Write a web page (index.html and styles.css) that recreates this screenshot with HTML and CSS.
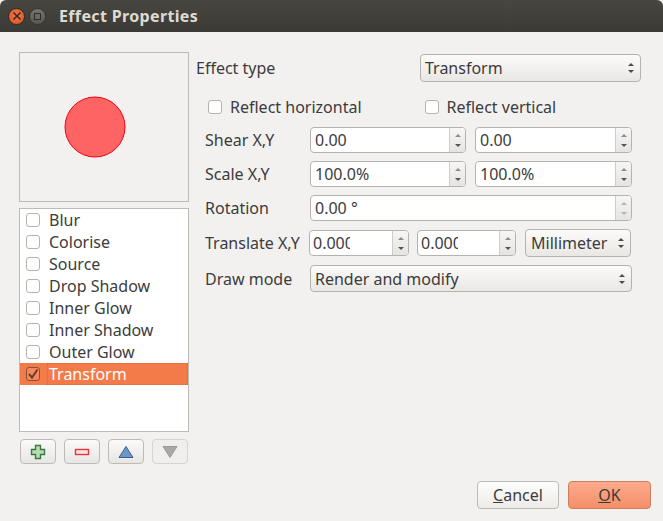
FILE: index.html
```html
<!DOCTYPE html>
<html lang="en">
<head>
    <meta charset="UTF-8">
    <meta name="viewport" content="width=device-width, initial-scale=1.0">
    <title>Effect Properties</title>
    <link rel="stylesheet" href="styles.css">
</head>
<body>
    <div class="titlebar">
        <span class="win-btn win-close">
            <svg width="10" height="10" viewBox="0 0 10 10"><path d="M1.5 1.5l7 7M8.5 1.5l-7 7" stroke="#3a2a20" stroke-width="1.6" fill="none"/></svg>
        </span>
        <span class="win-btn win-max"><span class="win-max-box"></span></span>
        <span class="win-title">Effect Properties</span>
    </div>

    <div class="content">
        <div class="left">
            <div class="preview">
                <svg width="62" height="62" viewBox="0 0 62 62"><circle cx="31" cy="31" r="30" fill="#ff6464" stroke="#f5000f" stroke-width="1"/></svg>
            </div>
            <div class="effect-list">
                <div class="effect-row"><span class="check"></span>Blur</div>
                <div class="effect-row"><span class="check"></span>Colorise</div>
                <div class="effect-row"><span class="check"></span>Source</div>
                <div class="effect-row"><span class="check"></span>Drop Shadow</div>
                <div class="effect-row"><span class="check"></span>Inner Glow</div>
                <div class="effect-row"><span class="check"></span>Inner Shadow</div>
                <div class="effect-row"><span class="check"></span>Outer Glow</div>
                <div class="effect-row selected">
                    <span class="check check-on">
                        <svg width="14" height="14" viewBox="0 0 14 14"><path d="M3 7l3 3.5L11.5 2.5" stroke="#6a3b2b" stroke-width="2" fill="none"/></svg>
                    </span>
                    <span class="focus-text">Transform</span>
                </div>
            </div>
            <div class="tool-row">
                <button class="tool-btn">
                    <svg width="16" height="16" viewBox="0 0 16 16"><path d="M5.5 1.5h5v4h4v5h-4v4h-5v-4h-4v-5h4z" fill="#b9dcb4" stroke="#3a7a40" stroke-width="1.4"/></svg>
                </button>
                <button class="tool-btn">
                    <svg width="16" height="16" viewBox="0 0 16 16"><rect x="1.5" y="5.5" width="13" height="5" fill="#fbe3e3" stroke="#e8353b" stroke-width="1.4"/></svg>
                </button>
                <button class="tool-btn">
                    <svg width="16" height="16" viewBox="0 0 16 16"><path d="M8 2.5l7 11H1z" fill="#6b96c8" stroke="#3f5f8c" stroke-width="1"/></svg>
                </button>
                <button class="tool-btn tool-off">
                    <svg width="16" height="16" viewBox="0 0 16 16"><path d="M8 13.5L1 2.5h14z" fill="#a8a8a8" stroke="#9a9a9a" stroke-width="1"/></svg>
                </button>
            </div>
        </div>

        <div class="right">
            <div class="type-row">
                <span class="type-label">Effect type</span>
                <div class="combo combo-type"><span class="combo-text">Transform</span><span class="updown"><i class="up"></i><i class="down"></i></span></div>
            </div>

            <div class="reflect-row">
                <span class="reflect-item"><span class="check"></span>Reflect horizontal</span>
                <span class="reflect-item"><span class="check"></span>Reflect vertical</span>
            </div>

            <div class="form-row">
                <span class="form-label">Shear X,Y</span>
                <div class="spin spin-half"><span class="spin-text">0.00</span><span class="spin-arrows"><i class="up"></i><i class="down"></i></span></div>
                <div class="spin spin-half2"><span class="spin-text">0.00</span><span class="spin-arrows"><i class="up"></i><i class="down"></i></span></div>
            </div>
            <div class="form-row">
                <span class="form-label">Scale X,Y</span>
                <div class="spin spin-half"><span class="spin-text">100.0%</span><span class="spin-arrows"><i class="up"></i><i class="down"></i></span></div>
                <div class="spin spin-half2"><span class="spin-text">100.0%</span><span class="spin-arrows"><i class="up"></i><i class="down"></i></span></div>
            </div>
            <div class="form-row rotation-row">
                <span class="form-label">Rotation</span>
                <div class="spin spin-full"><span class="spin-text">0.00 °</span><span class="spin-arrows spin-disabled"><i class="up"></i><i class="down"></i></span></div>
            </div>
            <div class="form-row translate-row">
                <span class="form-label">Translate X,Y</span>
                <div class="spin spin-tx"><span class="spin-text">0.000</span><span class="spin-arrows"><i class="up"></i><i class="down"></i></span></div>
                <div class="spin spin-ty"><span class="spin-text">0.000</span><span class="spin-arrows"><i class="up"></i><i class="down"></i></span></div>
                <div class="combo combo-unit"><span class="combo-text">Millimeter</span><span class="updown"><i class="up"></i><i class="down"></i></span></div>
            </div>
            <div class="form-row mode-row">
                <span class="form-label">Draw mode</span>
                <div class="combo combo-mode"><span class="combo-text">Render and modify</span><span class="updown"><i class="up"></i><i class="down"></i></span></div>
            </div>
        </div>
    </div>

    <div class="footer">
        <button class="dlg-btn"><u>C</u>ancel</button>
        <button class="dlg-btn dlg-ok"><u>O</u>K</button>
    </div>
</body>
</html>
```

FILE: styles.css
```css
* {
    box-sizing: border-box;
}
body {
    font-family: "Noto Sans", sans-serif;
    font-size: 16px;
    margin: 0;
    width: 663px;
    height: 521px;
    overflow: hidden;
    background-color: #f2f1f0;
    color: #3c3c3c;
}

/* title bar */
.titlebar {
    display: flex;
    align-items: center;
    height: 32px;
    padding-left: 8px;
    background: linear-gradient(#47463f, #3b3a36);
    border-radius: 6px 6px 0 0;
}
.win-btn {
    display: flex;
    align-items: center;
    justify-content: center;
    width: 17px;
    height: 17px;
    border-radius: 50%;
}
.win-close {
    background: radial-gradient(circle at 50% 40%, #f0784a, #d8501f);
    border: 1px solid #3a2a20;
}
.win-max {
    margin-left: 4px;
    background: linear-gradient(#75746f, #585752);
    border: 1px solid #35342f;
}
.win-max-box {
    width: 7px;
    height: 7px;
    border: 1px solid #2f2e2a;
    background: #6b6a65;
}
.win-title {
    margin-left: 13px;
    font-weight: 700;
    font-size: 16px;
    letter-spacing: 0.35px;
    color: #dfdbd2;
}

/* main area */
.content {
    display: flex;
    height: 449px;
    padding: 20px 0 0 19px;
}
.left {
    width: 170px;
}
.right {
    width: 445px;
    margin-left: 7px;
}
.preview {
    display: flex;
    align-items: center;
    justify-content: center;
    height: 150px;
    padding-right: 18px;
    border: 1px solid #bdbbb6;
}
.effect-list {
    height: 224px;
    margin-top: 6px;
    border: 1px solid #bdbbb6;
    background: #fff;
}
.effect-row {
    display: flex;
    align-items: center;
    height: 22px;
    padding-left: 6px;
    white-space: nowrap;
}
.effect-row .check {
    margin-right: 9px;
}
.effect-row.selected {
    background: #f37a49;
    color: #fff;
}
.focus-text {
    flex: 1;
    line-height: 20px;
    margin-left: -2px;
    padding-left: 1px;
    border: 1px dotted #b9714f;
}
.check {
    display: inline-block;
    flex: none;
    width: 14px;
    height: 14px;
    background: #fff;
    border: 1px solid #b5b3ae;
    border-radius: 3px;
}
.check-on {
    display: flex;
    background: #f4875c;
    border-color: #8f4f36;
}
.check-on svg {
    margin: -1px;
}
.tool-row {
    display: flex;
    gap: 8px;
    margin: 7px 0 0 1px;
}
.tool-btn {
    display: flex;
    align-items: center;
    justify-content: center;
    width: 36px;
    height: 25px;
    padding: 0;
    background: linear-gradient(#fafafa, #e8e6e3);
    border: 1px solid #bdbbb6;
    border-radius: 4px;
}
.tool-off {
    background: #f0efee;
    border-color: #d6d4d0;
}

/* right side rows */
.type-row {
    display: flex;
    align-items: center;
    justify-content: space-between;
    height: 28px;
    margin-top: 2px;
}
.reflect-row {
    display: flex;
    margin-top: 11px;
    margin-bottom: 6px;
    padding-left: 12px;
    height: 28px;
    align-items: center;
}
.reflect-item {
    display: flex;
    align-items: center;
    width: 217px;
    white-space: nowrap;
}
.reflect-item .check {
    margin-right: 8px;
}
.form-row {
    display: flex;
    align-items: center;
    gap: 9px;
    height: 26px;
    margin-bottom: 8px;
    padding-left: 9px;
}
.form-label {
    flex: none;
    width: 105px;
    margin-right: -9px;
    white-space: nowrap;
}
.rotation-row {
    margin-bottom: 9px;
}
.translate-row {
    gap: 8px;
    margin-bottom: 9px;
}
.mode-row {
    height: 27px;
}

/* controls */
.spin {
    display: flex;
    height: 26px;
    background: #fff;
    border: 1px solid #b5b3ae;
    border-radius: 4px;
    overflow: hidden;
}
.spin-half {
    width: 156px;
}
.spin-half2 {
    width: 157px;
}
.spin-full {
    width: 322px;
}
.spin-tx {
    width: 100px;
}
.spin-ty {
    width: 99px;
}
.spin-text {
    flex: 1;
    min-width: 0;
    padding-left: 4px;
    line-height: 24px;
    overflow: hidden;
    white-space: nowrap;
}
.spin-tx .spin-text,
.spin-ty .spin-text {
    flex: none;
    width: 40px;
    margin-right: auto;
    padding-left: 3px;
}
.spin-arrows {
    display: flex;
    flex: none;
    flex-direction: column;
    align-items: center;
    justify-content: center;
    gap: 7px;
    width: 16px;
    background: linear-gradient(#f7f6f5, #e6e4e1);
    border-left: 1px solid #cfcdc9;
}
.spin-arrows i,
.updown i {
    width: 0;
    height: 0;
    border-left: 3px solid transparent;
    border-right: 3px solid transparent;
}
.spin-arrows .up {
    border-bottom: 3px solid #8d8c88;
}
.spin-arrows .down {
    border-top: 3px solid #55544f;
}
.spin-disabled .up,
.spin-disabled .down {
    border-top-color: #b5b3ae;
    border-bottom-color: #b5b3ae;
}
.combo {
    display: flex;
    flex: none;
    align-items: center;
    justify-content: space-between;
    height: 27px;
    padding: 0 6px 0 4px;
    background: linear-gradient(#fbfbfa, #e9e7e4);
    border: 1px solid #b5b3ae;
    border-radius: 4px;
    white-space: nowrap;
}
.combo-type {
    width: 221px;
    height: 28px;
}
.combo-unit {
    width: 106px;
    margin-left: 1px;
    height: 28px;
    padding-left: 5px;
}
.combo-mode {
    width: 322px;
}
.updown {
    display: flex;
    flex: none;
    flex-direction: column;
    align-items: center;
    gap: 4px;
}
.updown .up {
    border-bottom: 3px solid #4c4b47;
}
.updown .down {
    border-top: 3px solid #4c4b47;
}

/* dialog buttons */
.footer {
    display: flex;
    justify-content: flex-end;
    gap: 9px;
    padding-right: 12px;
}
.dlg-btn {
    width: 82px;
    height: 28px;
    padding: 0;
    font-family: inherit;
    font-size: 16px;
    color: #3c3c3c;
    background: linear-gradient(#fdfdfc, #ecebe8);
    border: 1px solid #bdbbb6;
    border-radius: 4px;
}
.dlg-ok {
    width: 83px;
    background: linear-gradient(#fdab8c, #f58e68);
    border-color: #c8805f;
}
```
